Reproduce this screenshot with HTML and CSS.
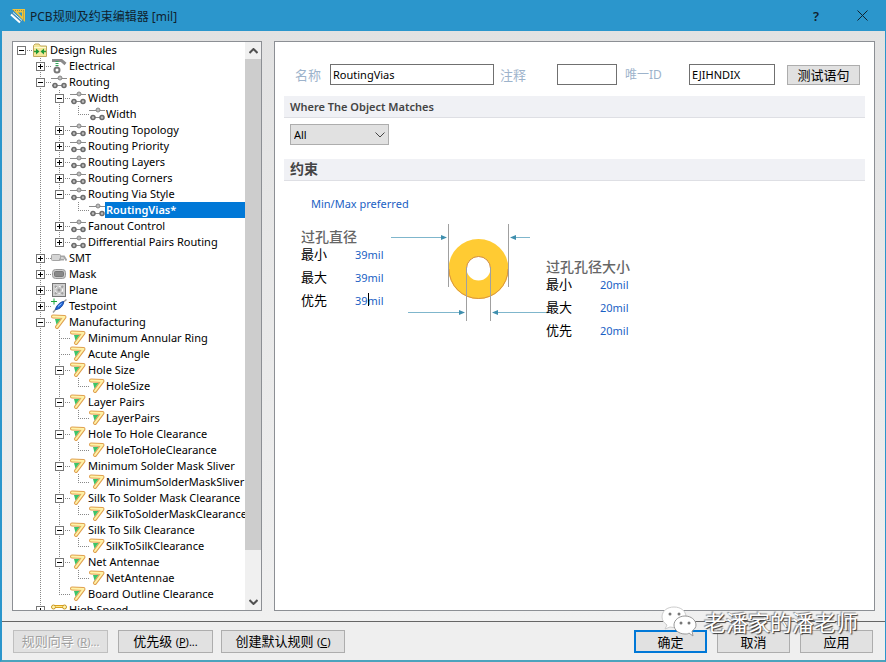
FILE: index.html
```html
<!DOCTYPE html>
<html lang="zh-CN">
<head>
    <meta charset="UTF-8">
    <meta name="viewport" content="width=device-width, initial-scale=1.0">
    <title>PCB规则及约束编辑器 [mil]</title>
    <link rel="stylesheet" href="styles.css">
</head>
<body>

    <!-- icon set -->
    <svg class="sprite" aria-hidden="true">
        <symbol id="folder" viewBox="0 0 16 16">
            <path d="M1.5 14.500V3.500L3 2h4l1.500 2h6v10.500z" fill="#f5e79a" stroke="#c0a860"/>
            <path d="M2 5.500h12" stroke="#fffbd0"/>
            <path d="M2 9.500H6M14 9.500H10" stroke="#2a9a3a" stroke-width="1.500"/>
            <path d="M4 6.500l3.500 3-3.500 3zM12 6.500l-3.500 3 3.500 3z" fill="#1f9a35"/>
        </symbol>
        <symbol id="electrical" viewBox="0 0 16 16">
            <path d="M1 2.500h9.500l4 3.500" fill="none" stroke="#8b8b8b" stroke-width="3"/>
            <path d="M6 3v6" stroke="#35a35a" stroke-width="3" stroke-dasharray="1 1"/>
            <circle cx="6" cy="12" r="2.500" fill="#fff" stroke="#777" stroke-width="2"/>
        </symbol>
        <symbol id="route" viewBox="0 0 16 16">
            <path d="M0 4.500h16M1 11.500h14" stroke="#8a8a8a" stroke-width="1"/>
            <circle cx="9" cy="4" r="2" fill="#bbb" stroke="#888"/>
            <circle cx="4" cy="11.500" r="2" fill="#bbb" stroke="#6c6c6c" stroke-width="1.500"/>
            <circle cx="13" cy="11.500" r="2" fill="#bbb" stroke="#6c6c6c" stroke-width="1.500"/>
        </symbol>
        <symbol id="smt" viewBox="0 0 16 16">
            <rect x="0.500" y="4.500" width="9" height="6" rx="1" fill="#d5d5d5" stroke="#a5a5a5"/>
            <path d="M9 6.500h4l2.500 4M8 9.500h5" fill="none" stroke="#a5a5a5" stroke-width="2"/>
        </symbol>
        <symbol id="mask" viewBox="0 0 16 16">
            <rect x="1.500" y="3.500" width="13" height="9" rx="3" fill="#ccc" stroke="#999"/>
            <rect x="3.500" y="5.500" width="9" height="5" rx="1" fill="#888" stroke="#777"/>
        </symbol>
        <symbol id="plane" viewBox="0 0 16 16">
            <rect x="1.500" y="1.500" width="13" height="13" fill="#d0d0d0" stroke="#777"/>
            <path d="M4 4l8 8M12 4l-8 8" stroke="#a0a0a0" stroke-width="2"/>
            <circle cx="8" cy="8" r="3.500" fill="#c4c4c4" stroke="#fff" stroke-dasharray="2 2"/>
            <circle cx="8" cy="8" r="1.500" fill="#999"/>
        </symbol>
        <symbol id="testpoint" viewBox="0 0 16 16">
            <path d="M2 14.500L5 11M12 4.500L15.500 1.500" stroke="#999" stroke-width="1.500"/>
            <path d="M4.500 11.500C5 8 9 4 12.500 3.500C13 7 9 11.500 4.500 11.500z" fill="#2468d8" stroke="#1747a0"/>
            <path d="M7 8.500l3.500-3" stroke="#9cc4ff"/>
            <path d="M0 3.500h6M3 0.500v6" stroke="#1ba63a"/>
        </symbol>
        <symbol id="manufacture" viewBox="0 0 16 16">
            <path d="M2 2.500L13.500 3L6 13" fill="none" stroke="#e0a050" stroke-width="4" stroke-linecap="round" stroke-linejoin="round"/>
            <path d="M2 2.500L13.500 3L6 13" fill="none" stroke="#fff3a8" stroke-width="2" stroke-linecap="round" stroke-linejoin="round"/>
            <path d="M4 5h5.500l-4 5.500z" fill="#3cc468"/>
        </symbol>
        <symbol id="speed" viewBox="0 0 16 16">
            <path d="M3 4.500h10" stroke="#d8a020" stroke-width="3"/>
            <circle cx="2.500" cy="5" r="2" fill="#fff3b0" stroke="#c79620"/>
            <circle cx="13.500" cy="5" r="2" fill="#fff3b0" stroke="#c79620"/>
            <path d="M4.500 4.500h7" stroke="#ffe680"/>
        </symbol>
    </svg>

    <header class="titlebar">
        <svg class="logo" viewBox="0 0 16 16" aria-hidden="true">
            <path d="M2 1h13v13z" fill="#f0c43c"/>
            <path d="M3 2.500h10.500M13.500 2.500v10" stroke="#8f8a55" stroke-dasharray="1 1"/>
            <path d="M8 4.500h4v4z" fill="#2b96cc"/>
            <path d="M0 5.500l2.500-2.500 10.500 9.500-2.500 2.500z" fill="#3f8fbd"/>
            <path d="M1 6.500l9 8" stroke="#fff" stroke-width="2"/>
            <path d="M3 4.500l9 8" stroke="#e6f3fb"/>
        </svg>
        <h1>PCB规则及约束编辑器 [mil]</h1>
        <button type="button" class="win-btn" aria-label="Help">?</button>
        <button type="button" class="win-btn" aria-label="Close">
            <svg width="11" height="11" viewBox="0 0 11 11"><path d="M0.500 0.500l10 10M10.500 0.500l-10 10" stroke="#10222e"/></svg>
        </button>
    </header>

    <main>
        <nav class="tree-panel">
            <ul class="tree">
                <li><div class="row"><button class="toggle minus" aria-label="Collapse"></button><svg><use href="#folder"/></svg><a href="#">Design Rules</a></div>
                    <ul>
                        <li><div class="row"><button class="toggle plus" aria-label="Expand"></button><svg><use href="#electrical"/></svg><a href="#">Electrical</a></div></li>
                        <li><div class="row"><button class="toggle minus" aria-label="Collapse"></button><svg><use href="#route"/></svg><a href="#">Routing</a></div>
                            <ul>
                                <li><div class="row"><button class="toggle minus" aria-label="Collapse"></button><svg><use href="#route"/></svg><a href="#">Width</a></div>
                                    <ul>
                                        <li><div class="row leaf"><svg><use href="#route"/></svg><a href="#">Width</a></div></li>
                                    </ul>
                                </li>
                                <li><div class="row"><button class="toggle plus" aria-label="Expand"></button><svg><use href="#route"/></svg><a href="#">Routing Topology</a></div></li>
                                <li><div class="row"><button class="toggle plus" aria-label="Expand"></button><svg><use href="#route"/></svg><a href="#">Routing Priority</a></div></li>
                                <li><div class="row"><button class="toggle plus" aria-label="Expand"></button><svg><use href="#route"/></svg><a href="#">Routing Layers</a></div></li>
                                <li><div class="row"><button class="toggle plus" aria-label="Expand"></button><svg><use href="#route"/></svg><a href="#">Routing Corners</a></div></li>
                                <li><div class="row"><button class="toggle minus" aria-label="Collapse"></button><svg><use href="#route"/></svg><a href="#">Routing Via Style</a></div>
                                    <ul>
                                        <li><div class="row leaf"><svg><use href="#route"/></svg><a href="#" class="selected">RoutingVias*</a></div></li>
                                    </ul>
                                </li>
                                <li><div class="row"><button class="toggle plus" aria-label="Expand"></button><svg><use href="#route"/></svg><a href="#">Fanout Control</a></div></li>
                                <li><div class="row"><button class="toggle plus" aria-label="Expand"></button><svg><use href="#route"/></svg><a href="#">Differential Pairs Routing</a></div></li>
                            </ul>
                        </li>
                        <li><div class="row"><button class="toggle plus" aria-label="Expand"></button><svg><use href="#smt"/></svg><a href="#">SMT</a></div></li>
                        <li><div class="row"><button class="toggle plus" aria-label="Expand"></button><svg><use href="#mask"/></svg><a href="#">Mask</a></div></li>
                        <li><div class="row"><button class="toggle plus" aria-label="Expand"></button><svg><use href="#plane"/></svg><a href="#">Plane</a></div></li>
                        <li><div class="row"><button class="toggle plus" aria-label="Expand"></button><svg><use href="#testpoint"/></svg><a href="#">Testpoint</a></div></li>
                        <li><div class="row"><button class="toggle minus" aria-label="Collapse"></button><svg><use href="#manufacture"/></svg><a href="#">Manufacturing</a></div>
                            <ul>
                                <li><div class="row leaf"><svg><use href="#manufacture"/></svg><a href="#">Minimum Annular Ring</a></div></li>
                                <li><div class="row leaf"><svg><use href="#manufacture"/></svg><a href="#">Acute Angle</a></div></li>
                                <li><div class="row"><button class="toggle minus" aria-label="Collapse"></button><svg><use href="#manufacture"/></svg><a href="#">Hole Size</a></div>
                                    <ul>
                                        <li><div class="row leaf"><svg><use href="#manufacture"/></svg><a href="#">HoleSize</a></div></li>
                                    </ul>
                                </li>
                                <li><div class="row"><button class="toggle minus" aria-label="Collapse"></button><svg><use href="#manufacture"/></svg><a href="#">Layer Pairs</a></div>
                                    <ul>
                                        <li><div class="row leaf"><svg><use href="#manufacture"/></svg><a href="#">LayerPairs</a></div></li>
                                    </ul>
                                </li>
                                <li><div class="row"><button class="toggle minus" aria-label="Collapse"></button><svg><use href="#manufacture"/></svg><a href="#">Hole To Hole Clearance</a></div>
                                    <ul>
                                        <li><div class="row leaf"><svg><use href="#manufacture"/></svg><a href="#">HoleToHoleClearance</a></div></li>
                                    </ul>
                                </li>
                                <li><div class="row"><button class="toggle minus" aria-label="Collapse"></button><svg><use href="#manufacture"/></svg><a href="#">Minimum Solder Mask Sliver</a></div>
                                    <ul>
                                        <li><div class="row leaf"><svg><use href="#manufacture"/></svg><a href="#">MinimumSolderMaskSliver</a></div></li>
                                    </ul>
                                </li>
                                <li><div class="row"><button class="toggle minus" aria-label="Collapse"></button><svg><use href="#manufacture"/></svg><a href="#">Silk To Solder Mask Clearance</a></div>
                                    <ul>
                                        <li><div class="row leaf"><svg><use href="#manufacture"/></svg><a href="#">SilkToSolderMaskClearance</a></div></li>
                                    </ul>
                                </li>
                                <li><div class="row"><button class="toggle minus" aria-label="Collapse"></button><svg><use href="#manufacture"/></svg><a href="#">Silk To Silk Clearance</a></div>
                                    <ul>
                                        <li><div class="row leaf"><svg><use href="#manufacture"/></svg><a href="#">SilkToSilkClearance</a></div></li>
                                    </ul>
                                </li>
                                <li><div class="row"><button class="toggle minus" aria-label="Collapse"></button><svg><use href="#manufacture"/></svg><a href="#">Net Antennae</a></div>
                                    <ul>
                                        <li><div class="row leaf"><svg><use href="#manufacture"/></svg><a href="#">NetAntennae</a></div></li>
                                    </ul>
                                </li>
                                <li><div class="row leaf"><svg><use href="#manufacture"/></svg><a href="#">Board Outline Clearance</a></div></li>
                            </ul>
                        </li>
                        <li class="more"><div class="row"><button class="toggle plus" aria-label="Expand"></button><svg><use href="#speed"/></svg><a href="#">High Speed</a></div></li>
                    </ul>
                </li>
            </ul>
            <div class="scrollbar">
                <button type="button" aria-label="Scroll up"><svg width="9" height="6" viewBox="0 0 9 6"><path d="M0.500 5l4-4 4 4" fill="none" stroke="#505050" stroke-width="2"/></svg></button>
                <div class="track"><div class="thumb"></div></div>
                <button type="button" aria-label="Scroll down"><svg width="9" height="6" viewBox="0 0 9 6"><path d="M0.500 1l4 4 4-4" fill="none" stroke="#505050" stroke-width="2"/></svg></button>
            </div>
        </nav>

        <section class="detail">
            <form class="rule-form">
                <label for="ruleName">名称</label>
                <input type="text" id="ruleName" class="name" value="RoutingVias">
                <label for="comment">注释</label>
                <input type="text" id="comment" class="comment">
                <label for="uniqueId" class="uid-label">唯一ID</label>
                <input type="text" id="uniqueId" class="uid" value="EJIHNDIX">
                <button type="button" class="btn test">测试语句</button>
            </form>

            <h2>Where The Object Matches</h2>
            <div class="scope">
                <select aria-label="Where The Object Matches">
                    <option>All</option>
                </select>
                <svg class="chevron" width="10" height="6" viewBox="0 0 10 6" aria-hidden="true"><path d="M0.500 0.500l4.500 4.500 4.500-4.500" fill="none" stroke="#444"/></svg>
            </div>

            <h2 class="cn">约束</h2>
            <a href="#" class="preferred">Min/Max preferred</a>

            <div class="via">
                <div class="values">
                    <h3>过孔直径</h3>
                    <div class="value"><label for="dMin">最小</label><input type="text" id="dMin" value="39mil"></div>
                    <div class="value"><label for="dMax">最大</label><input type="text" id="dMax" value="39mil"></div>
                    <div class="value"><label for="dPref">优先</label><input type="text" id="dPref" value="39mil"><span class="caret"></span></div>
                </div>
                <svg class="via-drawing" width="156" height="104" viewBox="0 0 156 104">
                    <circle cx="88.500" cy="47" r="30" fill="#ffcb33"/>
                    <path d="M59 47a29.500 29.500 0 0 0 59 0" fill="none" stroke="#d99440"/>
                    <circle cx="88.500" cy="46.500" r="12" fill="#fff"/>
                    <path d="M76.500 46.500a12 12 0 0 1 24 0" fill="none" stroke="#d08a3a"/>
                    <path d="M58.500 2v63M118.500 2v63M76.500 45v54M100.500 45v54" stroke="#a0a0a0"/>
                    <path d="M1 15.500h52M125 15.500h15M18 90.500h53M107 90.500h52" stroke="#7fb6cc"/>
                    <path d="M51 13l6 2.500-6 2.500zM126 13l-6 2.500 6 2.500zM69 88l6 2.500-6 2.500zM108 88l-6 2.500 6 2.500z" fill="#3f8fae"/>
                </svg>
                <div class="values hole">
                    <h3>过孔孔径大小</h3>
                    <div class="value"><label for="hMin">最小</label><input type="text" id="hMin" value="20mil"></div>
                    <div class="value"><label for="hMax">最大</label><input type="text" id="hMax" value="20mil"></div>
                    <div class="value"><label for="hPref">优先</label><input type="text" id="hPref" value="20mil"></div>
                </div>
            </div>
        </section>
    </main>

    <footer>
        <button type="button" class="btn" disabled>规则向导 <span>(<u>R</u>)...</span></button>
        <button type="button" class="btn">优先级 <span>(<u>P</u>)...</span></button>
        <button type="button" class="btn wide">创建默认规则 <span>(<u>C</u>)</span></button>
        <button type="button" class="btn small ok">确定</button>
        <button type="button" class="btn small">取消</button>
        <button type="button" class="btn small">应用</button>
    </footer>

    <div class="watermark">
        <svg width="36" height="32" viewBox="0 0 36 32" aria-hidden="true">
            <path d="M13 1C6 1 1 5 1 11c0 3 2 6 5 8l-2 4 5-2c8 2 16-2 16-10C25 5 20 1 13 1z" fill="#fff" stroke="#ccc"/>
            <path d="M24 10c-6 0-11 4-11 9s5 9 11 9c2 0 3 0 4-1l4 3-1-5c3-2 4-4 4-6 0-5-5-9-11-9z" fill="#fff" stroke="#999"/>
            <g fill="#777"><circle cx="9" cy="8" r="1.500"/><circle cx="18" cy="8" r="1.500"/><circle cx="20" cy="17" r="1.500"/><circle cx="28" cy="17" r="1.500"/></g>
        </svg>
        <span>老潘家的潘老师</span>
    </div>

</body>
</html>
```

FILE: styles.css
```css
* {
    box-sizing: border-box;
}

body {
    display: flex;
    flex-direction: column;
    position: relative;
    height: 100vh;
    margin: 0;
    overflow: hidden;
    font-family: "Noto Sans", "Noto Sans CJK SC", sans-serif;
    font-size: 11px;
    color: #000;
    background: #efefef;
    border: 1px solid #2b96cc;
    border-left-width: 2px;
    border-bottom: 2px solid #4ba3bd;
}

button, input, select {
    font-family: inherit;
    font-size: inherit;
    color: inherit;
    margin: 0;
    padding: 0;
    border-radius: 0;
}

a {
    color: inherit;
    text-decoration: none;
}

.sprite {
    position: absolute;
    width: 0;
    height: 0;
}

/* title bar */
.titlebar {
    display: flex;
    align-items: center;
    flex: none;
    height: 30px;
    padding-left: 8px;
    background: #2b96cc;
}

.logo {
    width: 16px;
    height: 16px;
    margin-right: 4px;
}

.titlebar h1 {
    flex: 1;
    margin: 0;
    font-size: 12px;
    font-weight: normal;
    color: #10222e;
}

.win-btn {
    width: 46px;
    height: 30px;
    border: none;
    background: none;
    font-size: 13px;
    font-weight: 600;
    color: #10222e;
}

/* main area */
main {
    display: flex;
    flex: 1;
    gap: 12px;
    min-height: 0;
    padding: 10px 10px;
    background: linear-gradient(#e2e2e2, #f0f0f0);
    border-bottom: 1px solid #666;
}

.tree-panel {
    display: flex;
    flex: none;
    width: 250px;
    background: #fff;
    border: 1px solid #8c8f94;
}

.tree {
    flex: 1;
    min-width: 0;
    overflow: hidden;
}

.tree, .tree ul {
    list-style: none;
    margin: 0;
    padding: 0;
}

.tree ul {
    padding-left: 19px;
}

/* dotted guides: one vertical, one horizontal per node */
.tree li {
    background-image:
        repeating-linear-gradient(to bottom, #888 0 1px, transparent 1px 2px),
        repeating-linear-gradient(to right, #888 0 1px, transparent 1px 2px);
    background-repeat: no-repeat;
    background-position: 8px 0, 8px 8px;
    background-size: 1px 100%, 11px 1px;
}

.tree li:last-child {
    background-size: 1px 8px, 11px 1px;
}

.tree > li:last-child {
    background-size: 0 0, 11px 1px;
}

.tree li.more {
    background-size: 1px 100%, 11px 1px;
}

.row {
    display: flex;
    align-items: center;
    height: 16px;
    padding-left: 4px;
}

.row.leaf {
    padding-left: 19px;
}

.row svg {
    flex: none;
    width: 16px;
    height: 16px;
}

.row a {
    flex: 1;
    padding-left: 2px;
    line-height: 16px;
    white-space: nowrap;
}

/* fourth level sits closer to its icon */
.tree ul ul ul a {
    padding-left: 1px;
}

.row a.selected {
    background: #0078d7;
    color: #fff;
    font-weight: 600;
}

.toggle {
    flex: none;
    width: 9px;
    height: 9px;
    margin-right: 6px;
    border: 1px solid #777;
    background: linear-gradient(#000, #000) center / 5px 1px no-repeat #fff;
}

.toggle.plus {
    background:
        linear-gradient(#000, #000) center / 5px 1px no-repeat,
        linear-gradient(#000, #000) center / 1px 5px no-repeat #fff;
}

.scrollbar {
    display: flex;
    flex-direction: column;
    flex: none;
    width: 16px;
    background: #f0f0f0;
}

.scrollbar button {
    height: 17px;
    border: none;
    background: none;
    line-height: 0;
}

.track {
    flex: 1;
}

.thumb {
    height: 92%;
    background: #cdcdcd;
}

/* rule details */
.detail {
    flex: 1;
    min-width: 0;
    padding: 22px 9px;
    background: #fff;
    border: 1px solid #8c8f94;
}

.rule-form {
    display: flex;
    align-items: center;
    height: 21px;
    margin: 0 5px 11px 11px;
}

.rule-form label {
    flex: none;
    font-size: 13px;
    line-height: 18px;
    color: #9db3cb;
}

.rule-form .uid-label {
    margin-left: 8px;
    font-size: 12px;
}

.rule-form input {
    height: 21px;
    padding: 0 2px;
    border: 1px solid #707070;
    background: #fff;
}

.rule-form .name {
    width: 164px;
    margin: 0 6px 0 9px;
}

.rule-form .comment {
    width: 60px;
    margin-left: 31px;
}

.rule-form .uid {
    width: 86px;
    margin-left: auto;
    margin-right: 12px;
}

.btn {
    width: 95px;
    height: 23px;
    border: 1px solid #adadad;
    background: #e1e1e1;
    font-size: 13px;
    line-height: 18px;
    white-space: nowrap;
}

.btn span {
    font-size: 11px;
}

.btn:disabled {
    color: #a0a0a0;
    border-color: #bfbfbf;
    text-shadow: 1px 1px 0 #fff;
}

.btn.test {
    width: 73px;
    height: 20px;
    line-height: 16px;
}

.btn.wide {
    width: 124px;
}

.btn.small {
    width: 73px;
}

.btn.ok {
    margin-left: auto;
    border: 2px solid #0078d7;
    line-height: 16px;
}

.detail h2 {
    height: 22px;
    margin: 0;
    padding-left: 6px;
    font-size: 11px;
    font-weight: 600;
    line-height: 21px;
    color: #444;
    background: #f0f1f5;
    border-bottom: 1px solid #dedfe4;
}

.detail h2.cn {
    font-size: 14px;
    line-height: 20px;
}

.scope {
    display: flex;
    align-items: center;
    width: 99px;
    margin: 6px 6px 14px;
}

.scope select {
    width: 99px;
    height: 21px;
    padding-left: 3px;
    border: 1px solid #adadad;
    background: #e1e1e1;
    appearance: none;
}

.chevron {
    flex: none;
    margin-left: -14px;
    pointer-events: none;
}

.preferred {
    display: inline-block;
    margin: 15px 27px 10px;
    line-height: 16px;
    color: #1a5fc4;
}

.via {
    display: flex;
    margin-left: 17px;
}

.values {
    flex: none;
    width: 89px;
    padding-top: 6px;
}

.values.hole {
    padding-top: 36px;
}

.values h3 {
    margin: 0;
    font-size: 14px;
    font-weight: 500;
    line-height: 18px;
    color: #666;
    white-space: nowrap;
}

.value {
    display: flex;
    align-items: center;
    position: relative;
    height: 23px;
}

.values h3 + .value {
    margin-top: -4px;
}

.value label {
    width: 54px;
    font-size: 13px;
    line-height: 18px;
}

.value input {
    width: 34px;
    height: 20px;
    padding-top: 2px;
    border: none;
    background: none;
    color: #1a5fc4;
}

/* text cursor inside the field being edited */
.caret {
    position: absolute;
    left: 67px;
    top: 5px;
    width: 1px;
    height: 13px;
    background: #000;
}

.via-drawing {
    flex: none;
    overflow: visible;
}

footer {
    display: flex;
    flex: none;
    gap: 10px;
    padding: 8px 12px 7px 11px;
}

footer .wide {
    margin-left: -2px;
}

/* account mark over the lower right corner */
.watermark {
    display: flex;
    align-items: center;
    gap: 7px;
    position: absolute;
    right: 27px;
    bottom: 22px;
    pointer-events: none;
}

.watermark span {
    font-size: 22px;
    line-height: 30px;
    color: #fff;
    text-shadow: 1px 1px 1px #333, -1px -1px 1px #888;
}
```
